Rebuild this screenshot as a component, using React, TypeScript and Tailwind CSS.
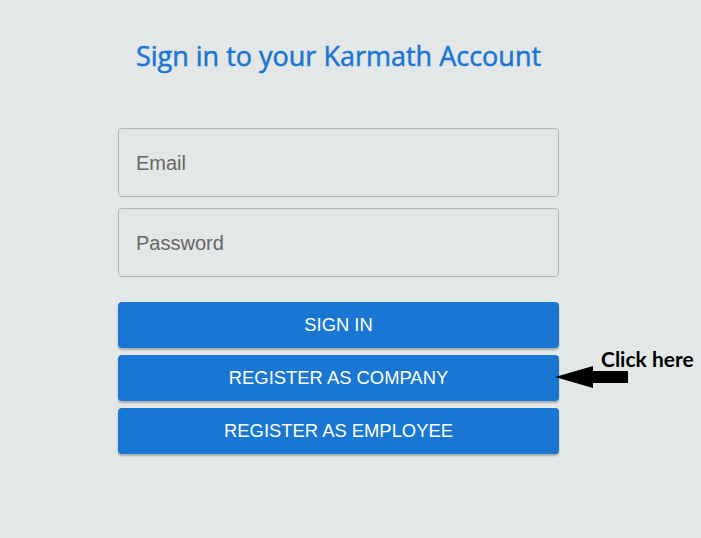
import React from "react";

export default function App() {
  return (
    <div className="relative min-h-[538px] w-full bg-[#e3e7e8]">
      <div className="ml-[118px] flex w-[441px] flex-col pt-[38px]">
        <h1
          className="h-[36px] text-center text-[27px] leading-[36px] text-[#1976d2] [-webkit-text-stroke:0.5px_#1976d2]"
          style={{ fontFamily: '"Open Sans", sans-serif' }}
        >
          Sign in to your Karmath Account
        </h1>
        <div className="mt-[54px] flex flex-col gap-[11px]">
          {["Email", "Password"].map((p) => (
            <div
              key={p}
              className="flex h-[69px] items-center rounded-[4px] border border-[#b3b5b6] px-[17px] text-[20px] text-[#666]"
              style={{ fontFamily: '"Liberation Sans", Arial, sans-serif' }}
            >
              {p}
            </div>
          ))}
        </div>
        <div className="mt-[25px] flex flex-col gap-[7px]">
          {["SIGN IN", "REGISTER AS COMPANY", "REGISTER AS EMPLOYEE"].map((t) => (
            <div
              key={t}
              className="flex h-[46px] items-center justify-center rounded-[4px] bg-[#1976d2] text-[18.4px] text-white shadow-[0_2px_2px_rgba(0,0,0,0.25)]"
              style={{ fontFamily: '"Liberation Sans", Arial, sans-serif' }}
            >
              {t}
            </div>
          ))}
        </div>
      </div>
      <div
        className="absolute left-[601px] top-[346px] text-[21px] font-bold leading-[26px] text-black"
        style={{ fontFamily: 'Lato, "Open Sans", sans-serif' }}
      >
        Click here
      </div>
      <svg className="absolute left-[554px] top-[365px]" width="76" height="24" viewBox="0 0 76 24">
        <path d="M1 12 L39 1 L39 6 L74 6 L74 18 L39 18 L39 23 Z" fill="#000" />
      </svg>
    </div>
  );
}
